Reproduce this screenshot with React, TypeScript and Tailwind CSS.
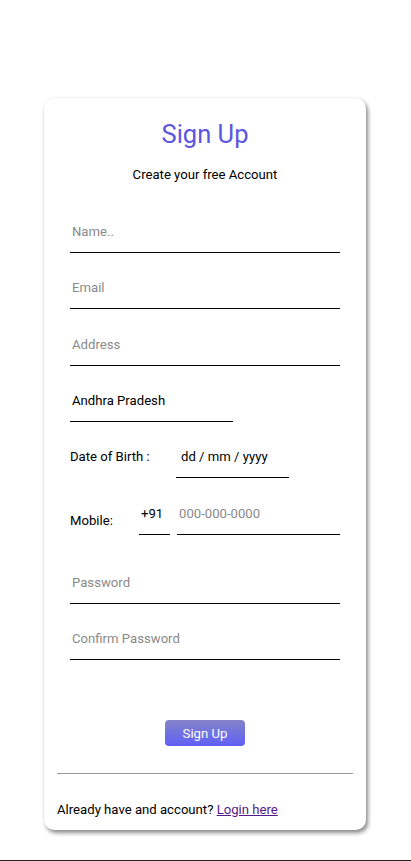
import React from "react";

const font = { fontFamily: "Roboto, 'Noto Sans', sans-serif" };

export default function App() {
  return (
    <div className="min-h-[861px] bg-white text-[13.15px] text-black" style={font}>
      <div className="pt-[98px]">
        <div className="ml-[44px] w-[322px] rounded-[10px] bg-white px-[26px] pt-[21px] pb-[10px] shadow-[2px_3px_4px_rgba(0,0,0,0.45),0_0_3px_rgba(0,0,0,0.08)]">
          <h1 className="h-[28px] pt-[1px] text-center text-[25.5px] leading-[28px] text-[#5b57e0]">Sign Up</h1>
          <p className="mt-[17px] pt-[1px] text-center leading-[20px]">Create your free Account</p>

          <input
            className="mt-[32px] block h-[36px] w-full border-b border-black px-[2px] pt-[1px] pb-[7px] outline-none placeholder:text-[#8a8a8a]"
            placeholder="Name.."
          />
          <input
            className="mt-[20px] block h-[36px] w-full border-b border-black px-[2px] pt-[1px] pb-[7px] outline-none placeholder:text-[#8a8a8a]"
            placeholder="Email"
          />
          <input
            className="mt-[21px] block h-[36px] w-full border-b border-black px-[2px] pt-[1px] pb-[7px] outline-none placeholder:text-[#8a8a8a]"
            placeholder="Address"
          />
          <div className="mt-[20px] flex h-[36px] w-[163px] items-start border-b border-black px-[2px] pt-[1px]">
            <span className="flex h-[27px] items-center">Andhra Pradesh</span>
          </div>

          <div className="mt-[20px] flex items-start">
            <span className="flex h-[28px] w-[106px] items-center pt-[2px]">Date of Birth :</span>
            <div className="flex h-[36px] w-[113px] items-start border-b border-black px-[5px] pt-[1px]">
              <span className="flex h-[27px] items-center">dd / mm / yyyy</span>
            </div>
          </div>

          <div className="mt-[21px] flex items-start">
            <span className="mt-[12px] w-[69px] leading-[20px]">Mobile:</span>
            <div className="flex h-[36px] w-[31px] items-start border-b border-black px-[2px] pt-[1px]">
              <span className="flex h-[27px] items-center">+91</span>
            </div>
            <input
              className="ml-[7px] block h-[36px] w-[163px] border-b border-black px-[2px] pt-[1px] pb-[7px] outline-none placeholder:text-[#8a8a8a]"
              placeholder="000-000-0000"
            />
          </div>

          <input
            type="password"
            className="mt-[33px] block h-[36px] w-full border-b border-black px-[2px] pt-[1px] pb-[7px] outline-none placeholder:text-[#8a8a8a]"
            placeholder="Password"
          />
          <input
            type="password"
            className="mt-[20px] block h-[36px] w-full border-b border-black px-[2px] pt-[1px] pb-[7px] outline-none placeholder:text-[#8a8a8a]"
            placeholder="Confirm Password"
          />

          <button className="mx-auto mt-[60px] block h-[26px] w-[80px] rounded-[4px] bg-linear-to-b from-[#8582c8] to-[#605ef6] pt-[1px] text-white">
            Sign Up
          </button>

          <div className="mx-[-13px] mt-[27px] h-px bg-[#9a9a9a]" />

          <p className="mx-[-13px] mt-[25px] pt-[1px] leading-[20px]">
            Already have and account?{" "}
            <a href="#" className="text-[#551a8b] underline">
              Login here
            </a>
          </p>
        </div>
      </div>
      <div className="mt-[30px] h-px w-full bg-[#222]" />
    </div>
  );
}
